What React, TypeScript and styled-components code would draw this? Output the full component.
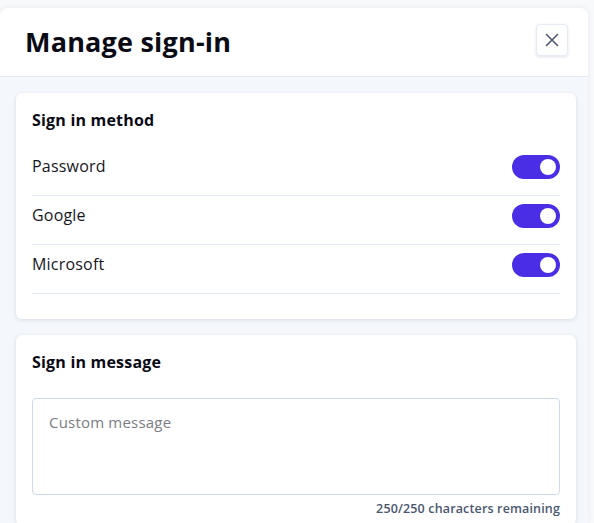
import React from "react";
import styled, { createGlobalStyle } from "styled-components";

const Global = createGlobalStyle`
  html, body { margin: 0; padding: 0; background: #f8f9fb; }
  body { font-family: "Open Sans", "Noto Sans", sans-serif; color: #111118; }
  * { box-sizing: border-box; }
`;

const Panel = styled.div`
  margin-top: 8px;
  width: 588px;
  height: 515px;
  border-radius: 8px 8px 0 0;
  background: #f4f7fb;
  box-shadow: 0 0 6px rgba(30, 40, 80, 0.08);
  overflow: hidden;
  display: flex;
  flex-direction: column;
`;

const Header = styled.header`
  height: 69px;
  flex: none;
  background: #ffffff;
  border-bottom: 1px solid #e1e8f2;
  display: flex;
  align-items: center;
  justify-content: space-between;
  padding: 0 20px 0 25px;
`;

const Title = styled.h1`
  margin: 0 0 2px;
  font-size: 27px;
  font-weight: 700;
  color: #0b0b16;
  letter-spacing: 0.2px;
`;

const CloseButton = styled.button`
  width: 32px;
  height: 32px;
  padding: 0;
  border: 1px solid #e6ebf3;
  border-radius: 4px;
  background: #fff;
  box-shadow: 0 1px 3px rgba(40, 60, 110, 0.14);
  display: flex;
  align-items: center;
  justify-content: center;
  color: #4c5870;
  margin-bottom: 4px;
`;

const Body = styled.div`
  flex: 1;
  width: 576px;
  padding: 16px 0 0 16px;
  display: flex;
  flex-direction: column;
  gap: 16px;
`;

const Card = styled.section`
  background: #fff;
  border-radius: 6px;
  box-shadow: 0 1px 4px rgba(30, 45, 90, 0.12);
  padding: 17px 16px 25px;
`;

const CardTitle = styled.h2`
  margin: 0;
  font-size: 16px;
  font-weight: 700;
  color: #0b0b16;
  line-height: 20px;
  letter-spacing: 0.2px;
`;

const Rows = styled.div`
  margin-top: 17px;
  display: flex;
  flex-direction: column;
`;

const Row = styled.div`
  height: 49px;
  display: flex;
  align-items: center;
  justify-content: space-between;
  border-bottom: 1px solid #e3eaf3;
  padding-bottom: 11px;
  font-size: 16px;
  color: #16161e;
  letter-spacing: 0.2px;
`;

const Track = styled.span<{ $on: boolean }>`
  width: 48px;
  height: 24px;
  border-radius: 12px;
  background: ${(p) => (p.$on ? "#4a2ee6" : "#cfd6e2")};
  display: flex;
  align-items: center;
  justify-content: ${(p) => (p.$on ? "flex-end" : "flex-start")};
  padding: 0 4px;
  margin-top: 3px;
`;

const Knob = styled.span`
  width: 16px;
  height: 16px;
  border-radius: 50%;
  background: #fff;
`;

const MessageCard = styled(Card)`
  padding-bottom: 8px;
`;

const TextArea = styled.textarea`
  display: block;
  margin-top: 26px;
  width: 528px;
  height: 97px;
  resize: none;
  border: 1px solid #cfd9e8;
  border-radius: 4px;
  padding: 13px 16px;
  font-family: inherit;
  font-size: 15px;
  letter-spacing: 0.2px;
  color: #16161e;
  outline: none;
  &::placeholder { color: #7b7c84; }
`;

const Counter = styled.div`
  margin-top: 5px;
  text-align: right;
  font-size: 12.5px;
  font-weight: 600;
  letter-spacing: 0.15px;
  color: #4a5670;
`;

const methods = ["Password", "Google", "Microsoft"];

export default function App() {
  return (
    <>
      <Global />
      <Panel>
        <Header>
          <Title>Manage sign-in</Title>
          <CloseButton aria-label="Close">
            <svg width="14" height="14" viewBox="0 0 14 14" fill="none">
              <path d="M1.5 1.5L12.5 12.5M12.5 1.5L1.5 12.5" stroke="currentColor" strokeWidth="1.6" strokeLinecap="round" />
            </svg>
          </CloseButton>
        </Header>
        <Body>
          <Card>
            <CardTitle>Sign in method</CardTitle>
            <Rows>
              {methods.map((m) => (
                <Row key={m}>
                  <span>{m}</span>
                  <Track $on={true}>
                    <Knob />
                  </Track>
                </Row>
              ))}
            </Rows>
          </Card>
          <MessageCard>
            <CardTitle>Sign in message</CardTitle>
            <TextArea placeholder="Custom message" />
            <Counter>250/250 characters remaining</Counter>
          </MessageCard>
        </Body>
      </Panel>
    </>
  );
}
